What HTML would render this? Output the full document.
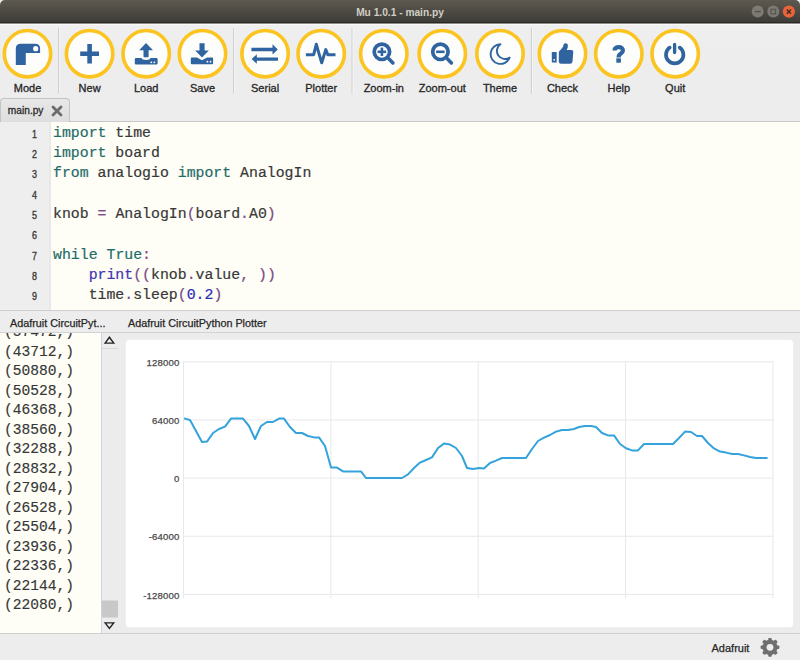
<!DOCTYPE html>
<html><head><meta charset="utf-8"><style>
*{margin:0;padding:0;box-sizing:border-box}
html,body{width:800px;height:660px;overflow:hidden;background:#ededed;font-family:"Liberation Sans",sans-serif}
.abs{position:absolute}
#title{position:absolute;left:0;top:0;width:800px;height:23px;background:linear-gradient(#5d5950,#3e3c38);border-bottom:1px solid #2a2926;border-radius:5px 5px 0 0}
#title .t{position:absolute;left:0;width:800px;top:6.6px;text-align:center;color:#d2cec5;font-size:10.2px;font-weight:bold}
#tb{position:absolute;left:0;top:23px;width:800px;height:75px;background:linear-gradient(#8d8c89 0,#8d8c89 1px,#fafafa 1px,#fafafa 2px,#efefef 2px,#ededed 30px)}
.lbl{position:absolute;top:59px;width:80px;text-align:center;font-size:11px;color:#262626;-webkit-text-stroke:0.3px #262626}
#tabbar{position:absolute;left:0;top:98px;width:800px;height:24px;background:#ededed;border-bottom:1px solid #c6c6c6}
#tab{position:absolute;left:0px;top:0px;width:69.5px;height:24px;background:linear-gradient(#e8e8e8,#dedede);border:1px solid #c4c4c4;border-bottom:none;border-radius:4px 4px 0 0}
#tab .t{position:absolute;left:6.8px;top:5.5px;font-size:10.2px;color:#2a2a2a;-webkit-text-stroke:0.3px #2a2a2a}
#editor{position:absolute;left:0;top:122px;width:800px;height:189px;background:#fefef7;border-bottom:1px solid #cfcfcf}
#gutter{position:absolute;left:0;top:0;width:50.5px;height:188px;background:linear-gradient(to right,#eeeeee 48.8px,#e8e8e9 48.8px)}
.ln{position:absolute;left:0;width:37px;text-align:right;font-size:10.5px;color:#3a3a3a;-webkit-text-stroke:0.35px #3a3a3a;height:20px;line-height:20px;margin-top:1.6px;transform:scaleX(0.85);transform-origin:right center}
.cl{position:absolute;left:53px;font-family:"Liberation Mono",monospace;font-size:14.85px;color:#383838;-webkit-text-stroke:0.2px currentColor;margin-top:0.5px;white-space:pre;height:20px;line-height:20px}
.kw{color:#1e6c68} .op{color:#7a4a86} .fn{color:#4234b4} .num{color:#2c2cb4}
#dockhdr{position:absolute;left:0;top:311px;width:800px;height:22px;background:#ededed;border-bottom:1px solid #d2d2d2}
#dockhdr .t{position:absolute;top:5.5px;font-size:10.8px;color:#262626;-webkit-text-stroke:0.25px #262626;white-space:nowrap}
#repl{position:absolute;left:0;top:332px;width:101px;height:301px;background:#fefef7;overflow:hidden}
.rl{position:absolute;left:4px;font-family:"Liberation Mono",monospace;font-size:14.6px;color:#363636;-webkit-text-stroke:0.15px #363636;white-space:pre;height:19px;line-height:19px}
#sb{position:absolute;left:100.5px;top:332px;width:18px;height:301px;background:#ececec;border-left:1px solid #d3d3d3}
#plotbg{position:absolute;left:118px;top:332px;width:682px;height:301px;background:#ececec}
#plot{position:absolute;left:126px;top:340px;width:666.5px;height:286.8px;background:#fff;border-radius:3.5px;box-shadow:0 0 0 1px #f0f0f0}
.yl{position:absolute;left:100px;width:79.6px;text-align:right;font-size:9.6px;letter-spacing:0.18px;color:#484848;-webkit-text-stroke:0.25px #484848;height:14px;line-height:14px}
#status{position:absolute;left:0;top:633px;width:800px;height:27px;background:#ededed;border-top:1px solid #cfcfcf}
#status .t{position:absolute;left:711.5px;top:8px;font-size:11px;color:#262626;-webkit-text-stroke:0.25px #262626}
</style></head><body>
<div id="title"><div class="t">Mu 1.0.1 - main.py</div></div>
<svg class="abs" style="left:0;top:0" width="800" height="23">
<circle cx="757.7" cy="11.6" r="6" fill="#7d7a74"/><rect x="754.7" y="10.9" width="6" height="1.4" fill="#55524c"/>
<circle cx="773.3" cy="11.6" r="6" fill="#7d7a74"/><rect x="771" y="9.3" width="4.6" height="4.6" fill="none" stroke="#55524c" stroke-width="1.1"/>
<circle cx="788.9" cy="11.6" r="6.1" fill="#e9643a"/><path d="M786.8,9.5 L791,13.7 M791,9.5 L786.8,13.7" stroke="#3a2a22" stroke-width="1.3"/>
</svg>
<div id="tb"><div class="lbl" style="left:-12.5px">Mode</div><div class="lbl" style="left:49.599999999999994px">New</div><div class="lbl" style="left:106.19999999999999px">Load</div><div class="lbl" style="left:162.5px">Save</div><div class="lbl" style="left:225.10000000000002px">Serial</div><div class="lbl" style="left:281.2px">Plotter</div><div class="lbl" style="left:343.8px">Zoom-in</div><div class="lbl" style="left:402.3px">Zoom-out</div><div class="lbl" style="left:460px">Theme</div><div class="lbl" style="left:522.5px">Check</div><div class="lbl" style="left:578.8px">Help</div><div class="lbl" style="left:635.2px">Quit</div></div>
<svg class="abs" style="left:0;top:0" width="800" height="100"><circle cx="27.5" cy="53.7" r="23.2" fill="#fdfdfb" stroke="#fbc420" stroke-width="3.6"/><path d="M15.8,64.9 V48.8 Q15.8,43.8 20.8,43.8 H35.1 Q40.1,43.8 40.1,48.8 V53 H25.8 V64.9 Z" fill="#2f64a0"/><circle cx="35.7" cy="48.7" r="2.6" fill="#fff"/><circle cx="89.6" cy="53.7" r="23.2" fill="#fdfdfb" stroke="#fbc420" stroke-width="3.6"/><path d="M80.19999999999999,53.7 H99.0 M89.6,44.0 V63.400000000000006" stroke="#2f64a0" stroke-width="4.6" stroke-linecap="butt"/><circle cx="146.2" cy="53.7" r="23.2" fill="#fdfdfb" stroke="#fbc420" stroke-width="3.6"/><path d="M146,43 L153,50.3 H148.6 V56.4 Q148.6,57.2 147.8,57.2 H144.3 Q143.5,57.2 143.5,56.4 V50.3 H139.2 Z" fill="#2f64a0"/><path d="M134.8,59.2 Q134.8,58.1 135.9,58.1 H141.5 Q142,60 146,60 Q150,60 150.5,58.1 H156.5 Q157.6,58.1 157.6,59.2 V63.6 Q157.6,64.6 156.5,64.6 H135.9 Q134.8,64.6 134.8,63.6 Z" fill="#2f64a0"/><circle cx="151.3" cy="62.3" r="0.9" fill="#fff"/><circle cx="154.3" cy="62.3" r="0.9" fill="#fff"/><circle cx="202.5" cy="53.7" r="23.2" fill="#fdfdfb" stroke="#fbc420" stroke-width="3.6"/><path d="M199.5,43.3 H204.6 V50.6 H208.8 L202,57.4 L195.2,50.6 H199.5 Z" fill="#2f64a0"/><path d="M190.8,58.5 Q190.8,57.4 191.9,57.4 H197 L202,60.2 L207,57.4 H212 Q213.1,57.4 213.1,58.5 V63.2 Q213.1,64.2 212,64.2 H191.9 Q190.8,64.2 190.8,63.2 Z" fill="#2f64a0"/><circle cx="207.4" cy="61.7" r="0.9" fill="#fff"/><circle cx="210.5" cy="61.7" r="0.9" fill="#fff"/><circle cx="265.1" cy="53.7" r="23.2" fill="#fdfdfb" stroke="#fbc420" stroke-width="3.6"/><path d="M251.4,47.7 H272.5 V44.3 L277.8,49.5 L272.5,54.5 V51.3 H251.4 Z" fill="#2f64a0"/><path d="M278,57.4 H256.8 V54.3 L251.6,59.1 L256.8,63.8 V60.8 H278 Z" fill="#2f64a0"/><circle cx="321.2" cy="53.7" r="23.2" fill="#fdfdfb" stroke="#fbc420" stroke-width="3.6"/><polyline points="305.9,54.7 313.7,54.7 316.3,44.3 321.7,62.8 325.8,49.6 327.8,54.7 335.5,54.7" fill="none" stroke="#2f64a0" stroke-width="3" stroke-linejoin="round" stroke-linecap="butt"/><circle cx="383.8" cy="53.7" r="23.2" fill="#fdfdfb" stroke="#fbc420" stroke-width="3.6"/><circle cx="381.9" cy="51.8" r="7.7" fill="none" stroke="#2f64a0" stroke-width="3.7"/><path d="M388.6,58.6 L392.9,62.9" stroke="#2f64a0" stroke-width="3.6" stroke-linecap="round"/><path d="M377.6,51.8 H386.1" stroke="#2f64a0" stroke-width="2.6"/><path d="M381.9,47.6 V56.0" stroke="#2f64a0" stroke-width="2.6"/><circle cx="442.3" cy="53.7" r="23.2" fill="#fdfdfb" stroke="#fbc420" stroke-width="3.6"/><circle cx="440.4" cy="51.8" r="7.7" fill="none" stroke="#2f64a0" stroke-width="3.7"/><path d="M447.1,58.6 L451.4,62.9" stroke="#2f64a0" stroke-width="3.6" stroke-linecap="round"/><path d="M436.1,51.8 H444.6" stroke="#2f64a0" stroke-width="2.6"/><circle cx="500" cy="53.7" r="23.2" fill="#fdfdfb" stroke="#fbc420" stroke-width="3.6"/><path d="M500.4,44.3 A9.8,9.8 0 1 0 509.6,57.6 A7.6,7.6 0 0 1 500.4,44.3 Z" fill="none" stroke="#2f64a0" stroke-width="1.9" stroke-linejoin="round"/><circle cx="562.5" cy="53.7" r="23.2" fill="#fdfdfb" stroke="#fbc420" stroke-width="3.6"/><rect x="551.8" y="52" width="4.9" height="10.5" rx="0.6" fill="#2f64a0"/><circle cx="554.2" cy="59.8" r="0.9" fill="#fff"/><path d="M558.8,52.5 Q559,50.8 560.5,50 L563.2,46.5 Q563.4,43.3 565.6,43.3 Q567.9,43.3 567.9,46 Q567.9,48.2 566.6,50 H571.5 Q573.3,50 573.3,51.8 L572.5,61.5 Q572.2,63.7 570,63.7 H561 Q558.8,63.7 558.8,61.5 Z" fill="#2f64a0"/><circle cx="618.8" cy="53.7" r="23.2" fill="#fdfdfb" stroke="#fbc420" stroke-width="3.6"/><path d="M614.5,50.5 C614.5,48.4 616.4,47.1 618.8,47.1 C621.3,47.1 622.9,48.5 622.9,50.4 C622.9,52.2 621.8,53 620.6,53.8 C619.3,54.6 618.6,55.3 618.6,57.4" fill="none" stroke="#2f64a0" stroke-width="4.2"/><rect x="616.3" y="58.3" width="4.6" height="4.4" fill="#2f64a0"/><circle cx="675.2" cy="53.7" r="23.2" fill="#fdfdfb" stroke="#fbc420" stroke-width="3.6"/><path d="M669.7,47.6 A8.7,8.7 0 1 0 679.7,47.6" fill="none" stroke="#2f64a0" stroke-width="3.7" stroke-linecap="round"/><path d="M674.6,44.4 V52.5" stroke="#2f64a0" stroke-width="3.3" stroke-linecap="round"/><rect x="58.2" y="28" width="1" height="65.5" fill="#c9c9c9"/><rect x="59.2" y="28" width="1" height="65.5" fill="#f6f6f6"/><rect x="233.2" y="28" width="1" height="65.5" fill="#c9c9c9"/><rect x="234.2" y="28" width="1" height="65.5" fill="#f6f6f6"/><rect x="351.6" y="28" width="1" height="65.5" fill="#c9c9c9"/><rect x="352.6" y="28" width="1" height="65.5" fill="#f6f6f6"/><rect x="530.9" y="28" width="1" height="65.5" fill="#c9c9c9"/><rect x="531.9" y="28" width="1" height="65.5" fill="#f6f6f6"/></svg>
<div id="tabbar"><div id="tab"><div class="t">main.py</div>
<svg class="abs" style="left:49.3px;top:4.6px" width="14" height="14"><path d="M3,3 L11,11 M11,3 L3,11" stroke="#6c6c6c" stroke-width="2.8" stroke-linecap="round"/></svg></div></div>
<div id="editor"><div id="gutter"><div class="ln" style="top:0.0px">1</div><div class="ln" style="top:20.35px">2</div><div class="ln" style="top:40.7px">3</div><div class="ln" style="top:61.050000000000004px">4</div><div class="ln" style="top:81.4px">5</div><div class="ln" style="top:101.75px">6</div><div class="ln" style="top:122.10000000000001px">7</div><div class="ln" style="top:142.45000000000002px">8</div><div class="ln" style="top:162.8px">9</div></div><div class="cl" style="top:0.0px"><span class="kw">import</span> time</div><div class="cl" style="top:20.35px"><span class="kw">import</span> board</div><div class="cl" style="top:40.7px"><span class="kw">from</span> analogio <span class="kw">import</span> AnalogIn</div><div class="cl" style="top:61.050000000000004px">&nbsp;</div><div class="cl" style="top:81.4px">knob <span class="op">=</span> AnalogIn<span class="op">(</span>board<span class="op">.</span>A0<span class="op">)</span></div><div class="cl" style="top:101.75px">&nbsp;</div><div class="cl" style="top:122.10000000000001px"><span class="kw">while</span> <span class="kw">True</span><span class="op">:</span></div><div class="cl" style="top:142.45000000000002px">    <span class="fn">print</span><span class="op">((</span>knob<span class="op">.</span>value<span class="op">,</span> <span class="op">))</span></div><div class="cl" style="top:162.8px">    time<span class="op">.</span>sleep<span class="op">(</span><span class="num">0.2</span><span class="op">)</span></div></div>

<div id="repl"><div class="abs" style="left:0;top:-9.0px;width:101px;height:320px"><div class="rl" style="top:0.0px">(57472,)</div><div class="rl" style="top:19.52px">(43712,)</div><div class="rl" style="top:39.04px">(50880,)</div><div class="rl" style="top:58.56px">(50528,)</div><div class="rl" style="top:78.08px">(46368,)</div><div class="rl" style="top:97.6px">(38560,)</div><div class="rl" style="top:117.12px">(32288,)</div><div class="rl" style="top:136.64px">(28832,)</div><div class="rl" style="top:156.16px">(27904,)</div><div class="rl" style="top:175.68px">(26528,)</div><div class="rl" style="top:195.2px">(25504,)</div><div class="rl" style="top:214.72px">(23936,)</div><div class="rl" style="top:234.24px">(22336,)</div><div class="rl" style="top:253.76px">(22144,)</div><div class="rl" style="top:273.28px">(22080,)</div></div></div>
<div id="sb">
<svg class="abs" style="left:0;top:0" width="17" height="301">
<path d="M3.1,11.1 L7.4,5.3 L11.7,11.1 Z" fill="none" stroke="#222" stroke-width="1.4" stroke-linejoin="miter"/>
<rect x="0" y="16" width="17" height="1" fill="#d8d8d8"/>
<rect x="0" y="268.5" width="17" height="17" fill="#c8c8c8"/>
<path d="M3.1,290.9 L7.4,296.4 L11.7,290.9 Z" fill="none" stroke="#222" stroke-width="1.4" stroke-linejoin="miter"/>
</svg></div>
<div id="plotbg"></div>
<div id="plot"></div>
<svg class="abs" style="left:0;top:0" width="800" height="660"><rect x="183" y="361.3" width="590.5" height="1" fill="#e8e8e8"/><rect x="183" y="419.45" width="590.5" height="1" fill="#e8e8e8"/><rect x="183" y="477.6" width="590.5" height="1" fill="#e8e8e8"/><rect x="183" y="535.75" width="590.5" height="1" fill="#e8e8e8"/><rect x="183" y="593.9" width="590.5" height="1" fill="#e8e8e8"/><rect x="183.0" y="361.3" width="1" height="237" fill="#e8e8e8"/><rect x="330.35" y="361.3" width="1" height="237" fill="#e8e8e8"/><rect x="477.7" y="361.3" width="1" height="237" fill="#e8e8e8"/><rect x="625.05" y="361.3" width="1" height="237" fill="#e8e8e8"/><rect x="772.4" y="361.3" width="1" height="237" fill="#e8e8e8"/>
<polyline points="184.0,418.4 190.0,420.0 202.0,442.0 207.0,441.6 213.0,433.0 219.0,429.0 225.0,426.6 231.0,418.6 243.0,418.6 249.0,426.0 255.0,439.0 261.0,426.0 267.0,422.0 273.0,422.0 279.0,418.6 284.0,418.6 290.0,427.0 296.0,433.0 302.0,433.0 308.0,436.0 314.0,437.4 319.0,437.4 325.0,446.0 331.0,467.6 337.0,467.6 343.0,471.4 361.0,471.4 366.0,478.0 402.0,478.0 408.0,474.4 414.0,468.0 420.0,462.6 426.0,460.0 432.0,457.4 438.0,448.0 444.0,443.6 450.0,444.6 456.0,448.0 462.0,456.0 467.0,468.0 473.0,469.0 479.0,468.0 484.0,468.6 490.0,463.0 496.0,460.6 502.0,458.0 526.0,458.0 532.0,449.0 538.0,441.0 544.0,437.6 550.0,435.0 556.0,431.6 562.0,430.0 568.0,430.0 574.0,429.0 579.0,427.0 585.0,426.0 591.0,426.0 596.0,427.0 602.0,433.0 608.0,435.4 614.0,435.4 620.0,444.0 626.0,448.2 632.0,450.4 638.0,450.4 644.0,444.0 673.0,444.0 679.0,438.0 685.0,431.6 691.0,432.0 697.0,436.0 702.0,436.0 708.0,443.0 714.0,448.4 720.0,451.6 726.0,452.6 732.0,454.0 738.0,454.0 744.0,455.4 750.0,457.0 756.0,458.0 767.6,458.0" fill="none" stroke="#34a3db" stroke-width="2" stroke-linejoin="round"/>
</svg>
<div class="yl" style="top:355.90000000000003px">128000</div><div class="yl" style="top:414.05px">64000</div><div class="yl" style="top:472.20000000000005px">0</div><div class="yl" style="top:530.35px">-64000</div><div class="yl" style="top:588.5px">-128000</div>
<div id="dockhdr"><div class="t" style="left:10px">Adafruit CircuitPyt...</div><div class="t" style="left:128px">Adafruit CircuitPython Plotter</div></div>
<div id="status"><div class="t">Adafruit</div>
<svg class="abs" style="left:758.2px;top:2.1px" width="24" height="24" viewBox="0 0 24 24">
<g transform="translate(12,11.3)" fill="#6f6f6f">
<circle r="7.6"/>
<rect x="-1.8" y="-9.4" width="3.6" height="4" rx="1" transform="rotate(0)"/><rect x="-1.8" y="-9.4" width="3.6" height="4" rx="1" transform="rotate(45)"/><rect x="-1.8" y="-9.4" width="3.6" height="4" rx="1" transform="rotate(90)"/><rect x="-1.8" y="-9.4" width="3.6" height="4" rx="1" transform="rotate(135)"/><rect x="-1.8" y="-9.4" width="3.6" height="4" rx="1" transform="rotate(180)"/><rect x="-1.8" y="-9.4" width="3.6" height="4" rx="1" transform="rotate(225)"/><rect x="-1.8" y="-9.4" width="3.6" height="4" rx="1" transform="rotate(270)"/><rect x="-1.8" y="-9.4" width="3.6" height="4" rx="1" transform="rotate(315)"/>
</g><circle cx="12" cy="11.3" r="3.4" fill="#ededed"/>
</svg></div>
</body></html>
